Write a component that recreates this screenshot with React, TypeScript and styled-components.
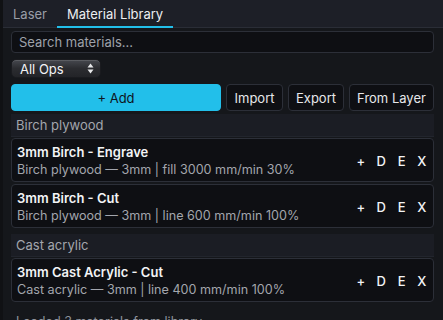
import React from "react";
import styled, { createGlobalStyle } from "styled-components";

const Global = createGlobalStyle`
  html, body { margin: 0; padding: 0; background: #15171b; }
  body { font-family: Inter, "Noto Sans", sans-serif; color: #e6e7ea; }
  * { box-sizing: border-box; }
`;

const Panel = styled.div`
  width: 443px;
  height: 320px;
  overflow: hidden;
  background: #15171b;
  border-left: 3px solid #101114;
  display: flex;
  flex-direction: column;
  & > * { flex-shrink: 0; }
`;

const TabBar = styled.div`
  height: 28px;
  background: #1d1f27;
  border-bottom: 1px solid #2a2d36;
  display: flex;
  align-items: stretch;
`;

const Tab = styled.div<{ $active?: boolean }>`
  display: flex;
  align-items: center;
  padding: 2px 10px 0;
  font-size: 13px;
  color: ${(p) => (p.$active ? "#eceef1" : "#9a9ea7")};
  border-bottom: 2px solid ${(p) => (p.$active ? "#22bfea" : "transparent")};
  margin-bottom: -1px;
`;

const Body = styled.div`
  padding: 3px 9px 0 8px;
  display: flex;
  flex-direction: column;
  & > * { flex-shrink: 0; }
`;

const Search = styled.input`
  height: 22px;
  background: #0e0f13;
  border: 1px solid #2c2f38;
  border-radius: 4px;
  color: #e6e7ea;
  font-family: inherit;
  font-size: 13px;
  padding: 0 7px;
  outline: none;
  &::placeholder { color: #9ea2aa; }
`;

const SelectBox = styled.div`
  margin-top: 6px;
  width: 90px;
  height: 19px;
  border-radius: 5px;
  border: 1px solid #1a1b1f;
  background: linear-gradient(#46484e, #2b2c30 50%, #232428);
  display: flex;
  align-items: center;
  justify-content: space-between;
  padding: 0 6px 0 8px;
  font-size: 13px;
  color: #f2f3f5;
  box-shadow: inset 0 1px 0 rgba(255,255,255,0.12);
`;

const Arrows = styled.svg`
  width: 7px;
  height: 11px;
`;

const ButtonRow = styled.div`
  margin-top: 6px;
  display: flex;
  gap: 5px;
  height: 27px;
`;

const Button = styled.button<{ $primary?: boolean; $w?: number }>`
  font-family: inherit;
  font-size: 13px;
  border-radius: 4px;
  padding: 0;
  ${(p) => (p.$w ? `width: ${p.$w}px;` : "flex: 1;")}
  background: ${(p) => (p.$primary ? "#22bfea" : "#0e0f13")};
  color: ${(p) => (p.$primary ? "#0e1420" : "#e6e7ea")};
  border: 1px solid ${(p) => (p.$primary ? "#22bfea" : "#2c2f38")};
`;

const GroupHeader = styled.div<{ $top: number }>`
  margin-top: ${(p) => p.$top}px;
  height: 23px;
  background: #1b1d24;
  border-bottom: 1px solid #22252d;
  display: flex;
  align-items: center;
  padding-left: 5px;
  font-size: 13px;
  color: #a3a6ad;
`;

const Card = styled.div<{ $top: number }>`
  margin-top: ${(p) => p.$top}px;
  height: 44px;
  background: #0e0f13;
  border: 1px solid #2c2f38;
  border-radius: 4px;
  display: flex;
  align-items: center;
  padding: 0 1px 0 5px;
`;

const Info = styled.div`
  flex: 1;
  display: flex;
  flex-direction: column;
  gap: 2px;
`;

const Title = styled.div`
  font-size: 13px;
  font-weight: 600;
  color: #f3f4f6;
`;

const Sub = styled.div`
  font-size: 12.6px;
  color: #a3a6ad;
`;

const Actions = styled.div`
  display: flex;
  font-size: 13px;
  color: #f3f4f6;
  font-weight: 500;
  padding-top: 2px;
`;

const Action = styled.span`
  width: 20.3px;
  text-align: center;
`;

const Footer = styled.div`
  margin-top: 12px;
  padding-left: 5px;
  font-size: 12.6px;
  color: #8f939b;
`;

const items = [
  {
    group: "Birch plywood",
    rows: [
      { title: "3mm Birch - Engrave", sub: "Birch plywood — 3mm | fill 3000 mm/min 30%" },
      { title: "3mm Birch - Cut", sub: "Birch plywood — 3mm | line 600 mm/min 100%" },
    ],
  },
  {
    group: "Cast acrylic",
    rows: [{ title: "3mm Cast Acrylic - Cut", sub: "Cast acrylic — 3mm | line 400 mm/min 100%" }],
  },
];

export default function App() {
  return (
    <>
      <Global />
      <Panel>
        <TabBar>
          <Tab>Laser</Tab>
          <Tab $active>Material Library</Tab>
        </TabBar>
        <Body>
          <Search placeholder="Search materials..." />
          <SelectBox>
            <span>All Ops</span>
            <Arrows viewBox="0 0 7 11">
              <path d="M3.5 0.5 L6.5 4.5 H0.5 Z" fill="#e8e9eb" />
              <path d="M3.5 10.5 L6.5 6.5 H0.5 Z" fill="#e8e9eb" />
            </Arrows>
          </SelectBox>
          <ButtonRow>
            <Button $primary>+ Add</Button>
            <Button $w={57}>Import</Button>
            <Button $w={56}>Export</Button>
            <Button $w={85}>From Layer</Button>
          </ButtonRow>
          {items.map((g, gi) => (
            <React.Fragment key={g.group}>
              <GroupHeader $top={gi === 0 ? 3 : 6}>{g.group}</GroupHeader>
              {g.rows.map((r, ri) => (
                <Card key={r.title} $top={ri === 0 ? 1 : 2}>
                  <Info>
                    <Title>{r.title}</Title>
                    <Sub>{r.sub}</Sub>
                  </Info>
                  <Actions>
                    <Action>+</Action>
                    <Action>D</Action>
                    <Action>E</Action>
                    <Action>X</Action>
                  </Actions>
                </Card>
              ))}
            </React.Fragment>
          ))}
          <Footer>Loaded 3 materials from library</Footer>
        </Body>
      </Panel>
    </>
  );
}
